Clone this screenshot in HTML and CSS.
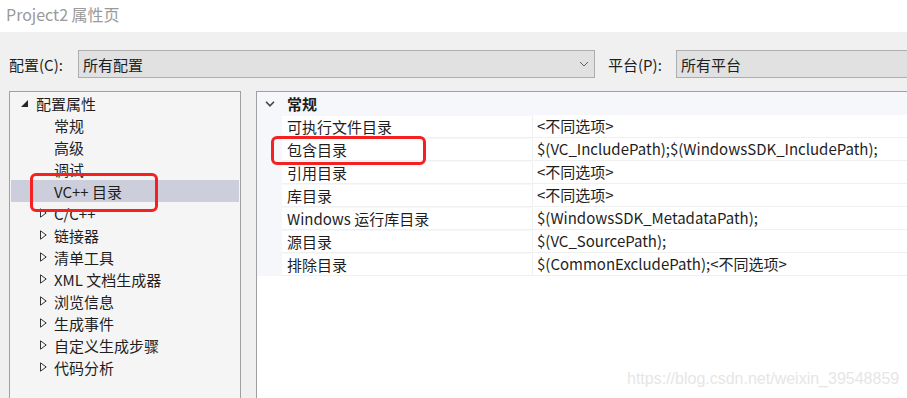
FILE: index.html
```html
<!DOCTYPE html>
<html lang="zh-CN">

    <head>
        <meta charset="UTF-8">
        <meta name="viewport" content="width=device-width, initial-scale=1.0">
        <title>Project2 属性页</title>
        <link rel="stylesheet" href="styles.css">
    </head>

    <body>

        <div class="titlebar">Project2 属性页</div>

        <div class="config-row">
            <label class="config-label">配置(C):</label>
            <div class="combo combo-config">
                <span>所有配置</span>
                <svg class="combo-arrow" width="10" height="6" viewBox="0 0 10 6">
                    <path d="M1 1 L5 5 L9 1" fill="none" stroke="#606060" stroke-width="1"/>
                </svg>
            </div>
            <label class="platform-label">平台(P):</label>
            <div class="combo combo-platform"><span>所有平台</span></div>
        </div>

        <div class="panels">
            <div class="tree">
                <div class="tree-row root">
                    <svg class="expander" width="7" height="7" viewBox="0 0 7 7">
                        <path d="M7 0 L7 7 L0 7 Z" fill="#262626"/>
                    </svg>
                    <span>配置属性</span>
                </div>
                <div class="tree-row leaf">常规</div>
                <div class="tree-row leaf">高级</div>
                <div class="tree-row leaf">调试</div>
                <div class="tree-row leaf selected">VC++ 目录</div>
                <div class="tree-row child"><svg class="collapsed" width="7" height="10" viewBox="0 0 7 10"><path d="M0.5 0.8 L6.2 5 L0.5 9.2 Z" fill="none" stroke="#333" stroke-width="1"/></svg><span>C/C++</span></div>
                <div class="tree-row child"><svg class="collapsed" width="7" height="10" viewBox="0 0 7 10"><path d="M0.5 0.8 L6.2 5 L0.5 9.2 Z" fill="none" stroke="#333" stroke-width="1"/></svg><span>链接器</span></div>
                <div class="tree-row child"><svg class="collapsed" width="7" height="10" viewBox="0 0 7 10"><path d="M0.5 0.8 L6.2 5 L0.5 9.2 Z" fill="none" stroke="#333" stroke-width="1"/></svg><span>清单工具</span></div>
                <div class="tree-row child"><svg class="collapsed" width="7" height="10" viewBox="0 0 7 10"><path d="M0.5 0.8 L6.2 5 L0.5 9.2 Z" fill="none" stroke="#333" stroke-width="1"/></svg><span>XML 文档生成器</span></div>
                <div class="tree-row child"><svg class="collapsed" width="7" height="10" viewBox="0 0 7 10"><path d="M0.5 0.8 L6.2 5 L0.5 9.2 Z" fill="none" stroke="#333" stroke-width="1"/></svg><span>浏览信息</span></div>
                <div class="tree-row child"><svg class="collapsed" width="7" height="10" viewBox="0 0 7 10"><path d="M0.5 0.8 L6.2 5 L0.5 9.2 Z" fill="none" stroke="#333" stroke-width="1"/></svg><span>生成事件</span></div>
                <div class="tree-row child"><svg class="collapsed" width="7" height="10" viewBox="0 0 7 10"><path d="M0.5 0.8 L6.2 5 L0.5 9.2 Z" fill="none" stroke="#333" stroke-width="1"/></svg><span>自定义生成步骤</span></div>
                <div class="tree-row child"><svg class="collapsed" width="7" height="10" viewBox="0 0 7 10"><path d="M0.5 0.8 L6.2 5 L0.5 9.2 Z" fill="none" stroke="#333" stroke-width="1"/></svg><span>代码分析</span></div>
            </div>

            <div class="grid">
                <div class="grid-header">
                    <svg class="header-chevron" width="10" height="6" viewBox="0 0 10 6">
                        <path d="M1 0.8 L5 4.8 L9 0.8" fill="none" stroke="#444" stroke-width="1.6"/>
                    </svg>
                    <span>常规</span>
                </div>
                <div class="grid-row"><div class="name">可执行文件目录</div><div class="value">&lt;不同选项&gt;</div></div>
                <div class="grid-row"><div class="name">包含目录</div><div class="value">$(VC_IncludePath);$(WindowsSDK_IncludePath);</div></div>
                <div class="grid-row"><div class="name">引用目录</div><div class="value">&lt;不同选项&gt;</div></div>
                <div class="grid-row"><div class="name">库目录</div><div class="value">&lt;不同选项&gt;</div></div>
                <div class="grid-row"><div class="name">Windows 运行库目录</div><div class="value">$(WindowsSDK_MetadataPath);</div></div>
                <div class="grid-row"><div class="name">源目录</div><div class="value">$(VC_SourcePath);</div></div>
                <div class="grid-row"><div class="name">排除目录</div><div class="value">$(CommonExcludePath);&lt;不同选项&gt;</div></div>
            </div>
        </div>

        <!-- annotations drawn on top of the screenshot -->
        <div class="mark mark-tree"></div>
        <div class="mark mark-grid"></div>
        <div class="watermark">https://blog.csdn.net/weixin_39548859</div>

    </body>

</html>
```

FILE: styles.css
```css
body {
    margin: 0;
    width: 907px;
    height: 398px;
    overflow: hidden;
    background-color: #f0f0f0;
    font-family: "Noto Sans CJK SC", "Noto Sans", sans-serif;
    font-size: 15px;
    color: #1e1e1e;
    position: relative;
}

.titlebar {
    height: 32px;
    line-height: 28px;
    padding-left: 6px;
    background-color: #ffffff;
    color: #9a9a9a;
    font-size: 16px;
}

.config-row {
    display: flex;
    align-items: center;
    height: 28px;
    margin-top: 18px;
}

.config-label {
    width: 69px;
    padding-left: 9px;
}

.combo {
    box-sizing: border-box;
    height: 28px;
    display: flex;
    align-items: center;
    padding-left: 4px;
    background-color: #e1e1e1;
    border: 1px solid #adadad;
}

.combo-config {
    width: 517px;
    justify-content: space-between;
    padding-right: 5px;
}

.combo-arrow {
    display: block;
}

.platform-label {
    width: 68px;
    padding-left: 13px;
}

.combo-platform {
    flex: 1;
    border-right: none;
}

.panels {
    display: flex;
    gap: 15px;
    margin-top: 13px;
    padding-left: 9px;
    height: 320px;
}

.tree {
    box-sizing: border-box;
    width: 232px;
    padding: 0 1px;
    background-color: #f5f5f5;
    border: 1px solid #a0a0a0;
}

.tree-row {
    height: 22px;
    display: flex;
    align-items: center;
}

.root {
    padding-left: 10px;
}

.root .expander {
    margin-right: 8px;
}

.leaf {
    padding-left: 43px;
}

.child {
    padding-left: 29px;
}

.child .collapsed {
    margin-right: 7px;
}

.selected {
    background-color: #cccedb;
}

.grid {
    flex: 1;
    background-color: #ffffff;
    border-top: 1px solid #a0a0a0;
    border-left: 1px solid #a0a0a0;
}

.grid-header {
    height: 23px;
    display: flex;
    align-items: center;
    padding-left: 8px;
    background-color: #f5f7fb;
    font-weight: bold;
}

.header-chevron {
    margin-right: 12px;
}

.grid-row {
    height: 23px;
    display: flex;
    align-items: center;
    padding-left: 25px;
    background-color: #f5f7fb;
}

.grid-row .name,
.grid-row .value {
    height: 22px;
    line-height: 22px;
    background-color: #ffffff;
    border-bottom: 1px solid #f0f0f0;
    white-space: nowrap;
}

.grid-row .name {
    box-sizing: border-box;
    width: 251px;
    padding-left: 5px;
    border-right: 1px solid #f0f0f0;
}

.grid-row .value {
    flex: 1;
    padding-left: 4px;
}

.mark {
    position: absolute;
    box-sizing: border-box;
    border: 3px solid #f52020;
    border-radius: 6px;
}

.mark-tree {
    left: 30px;
    top: 173px;
    width: 128px;
    height: 39px;
}

.mark-grid {
    left: 271px;
    top: 136px;
    width: 155px;
    height: 29px;
}

.watermark {
    position: absolute;
    left: 627px;
    top: 370px;
    font-family: "Liberation Sans", Arial, sans-serif;
    font-size: 16px;
    color: #e6e6e6;
}
```
